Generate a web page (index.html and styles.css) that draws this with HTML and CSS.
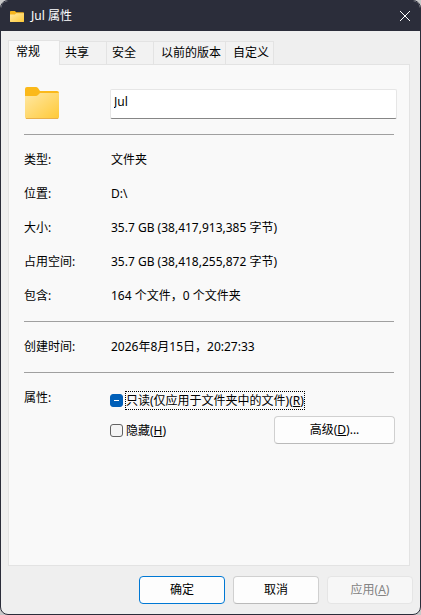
FILE: index.html
```
<!DOCTYPE html>
<html lang="zh-CN">

<head>
    <meta charset="UTF-8">
    <meta name="viewport" content="width=device-width, initial-scale=1.0">
    <title>Jul 属性</title>
    <link rel="stylesheet" href="styles.css">
</head>

<body>

    <form class="window" onsubmit="return false">
        <!-- 标题栏 -->
        <header class="titlebar">
            <svg class="title-icon" viewBox="0 0 34 28" preserveAspectRatio="none" aria-hidden="true">
                <path d="M0 2Q0 0 2 0H12L15 3H32Q34 3 34 6V26Q34 28 32 28H2Q0 28 0 26Z" fill="#f6b41c"/>
                <path d="M0 9H12L15 6H34V26Q34 28 32 28H2Q0 28 0 26Z" fill="url(#front)"/>
            </svg>
            <h1>Jul 属性</h1>
            <button type="button" class="close" aria-label="关闭">
                <svg viewBox="0 0 10 10"><path d="M0 0L10 10M10 0L0 10"/></svg>
            </button>
        </header>

        <!-- 选项卡 -->
        <div class="tabs" role="tablist">
            <button type="button" class="tab active" role="tab" aria-selected="true">常规</button>
            <button type="button" class="tab" role="tab">共享</button>
            <button type="button" class="tab" role="tab">安全</button>
            <button type="button" class="tab tab-wide" role="tab">以前的版本</button>
            <button type="button" class="tab tab-wide" role="tab">自定义</button>
        </div>

        <main class="panel">
            <div class="name-row">
                <svg class="folder" viewBox="0 0 34 32" aria-hidden="true">
                    <defs>
                        <linearGradient id="front" x1="0" y1="0" x2="1" y2="1">
                            <stop offset="0" stop-color="#ffe8a4"/>
                            <stop offset="1" stop-color="#ffc936"/>
                        </linearGradient>
                    </defs>
                    <path d="M0 2Q0 0 2 0H11Q12 0 13 1L15 4H32Q34 4 34 6V14H0Z" fill="#fbb91a"/>
                    <path d="M0 9H11Q12 9 13 8L15 6H34V30Q34 32 32 32H2Q0 32 0 30Z" fill="url(#front)"/>
                    <rect x="1" y="31" width="32" height="1" fill="#e9b04a"/>
                </svg>
                <input type="text" class="name" value="Jul" aria-label="名称">
            </div>

            <hr>

            <dl class="info">
                <dt>类型:</dt>
                <dd>文件夹</dd>
                <dt>位置:</dt>
                <dd>D:\</dd>
                <dt>大小:</dt>
                <dd>35.7 GB (38,417,913,385 字节)</dd>
                <dt>占用空间:</dt>
                <dd>35.7 GB (38,418,255,872 字节)</dd>
                <dt>包含:</dt>
                <dd>164 个文件，0 个文件夹</dd>
            </dl>

            <hr>

            <dl class="info">
                <dt>创建时间:</dt>
                <dd>2026年8月15日，20:27:33</dd>
            </dl>

            <hr>

            <!-- 属性 -->
            <div class="attributes">
                <span class="attr-title">属性:</span>
                <div class="attr-list">
                    <div class="check">
                        <input type="checkbox" id="readonly">
                        <label for="readonly" class="focused">只读(仅应用于文件夹中的文件)(<u>R</u>)</label>
                    </div>
                    <div class="hidden-row">
                        <div class="check">
                            <input type="checkbox" id="hidden">
                            <label for="hidden">隐藏(<u>H</u>)</label>
                        </div>
                        <button type="button" class="btn advanced">高级(<u>D</u>)...</button>
                    </div>
                </div>
            </div>
        </main>

        <!-- 按钮 -->
        <footer class="actions">
            <button type="submit" class="btn default">确定</button>
            <button type="button" class="btn">取消</button>
            <button type="button" class="btn" disabled>应用(<u>A</u>)</button>
        </footer>
    </form>

    <script>
        // 只读为部分选中状态
        document.getElementById('readonly').indeterminate = true;
    </script>

</body>

</html>
```
FILE: styles.css
```
* {
    box-sizing: border-box;
}

body {
    margin: 0;
    background-color: #c9c9c9;
}

body, button, input {
    font-family: "Noto Sans", "Noto Sans CJK SC", sans-serif;
    font-size: 12px;
    line-height: 18px;
    color: #000;
}

u {
    text-underline-offset: 1px;
}

.window {
    display: flex;
    flex-direction: column;
    min-height: 100vh;
    background-color: #efefef;
    border: 1px solid #2b2d3a;
    border-radius: 8px;
    overflow: hidden;
}

/* 标题栏 */
.titlebar {
    display: flex;
    align-items: center;
    height: 30px;
    padding-left: 9px;
    background-color: #2b2d3a;
}

.title-icon {
    width: 14px;
    height: 11px;
}

h1 {
    flex: 1;
    margin: 0 0 0 7px;
    font-size: 12px;
    font-weight: normal;
    color: #fff;
}

.close {
    display: flex;
    align-items: center;
    justify-content: center;
    width: 30px;
    height: 30px;
    padding: 0;
    border: none;
    background: none;
}

.close svg {
    width: 10px;
    height: 10px;
    overflow: visible;
    stroke: #fff;
}

/* 选项卡 */
.tabs {
    display: flex;
    align-items: flex-end;
    padding: 9px 7px 0;
}

.tab {
    height: 23px;
    padding: 0 17px 0 5px;
    border: 1px solid #e3e3e3;
    border-left: none;
    border-bottom: none;
    background-color: #f2f2f2;
    white-space: nowrap;
}

.tab.tab-wide {
    padding: 0 4px 0 7px;
}

.tab.active {
    z-index: 1;
    height: 25px;
    margin-bottom: -1px;
    padding: 0 19px 3px 7px;
    border-left: 1px solid #e3e3e3;
    background-color: #f9f9f9;
}

.panel {
    flex: 1;
    margin: 0 10px 0 7px;
    padding: 22px 15px;
    border: 1px solid #e3e3e3;
    background-color: #f9f9f9;
}

.name-row {
    display: flex;
    align-items: flex-end;
    margin-right: -3px;
}

.folder {
    width: 34px;
    height: 32px;
    margin: 0 51px 0 1px;
}

.name {
    flex: 1;
    min-width: 0;
    height: 30px;
    padding: 0 3px 6px;
    border: 1px solid #e6e6e6;
    border-bottom-color: #868686;
    border-radius: 2px;
    background-color: #fff;
    outline: none;
}

hr {
    height: 1px;
    margin: 8px 0;
    border: none;
    background-color: #a0a0a0;
}

.name-row + hr {
    margin-top: 15px;
}

.info {
    display: grid;
    grid-template-columns: 87px 1fr;
    margin: 0;
    line-height: 34px;
}

.info dd {
    margin: 0;
}

/* 属性 */
.attributes {
    display: grid;
    grid-template-columns: 86px 1fr;
    margin-right: -1px;
    padding-top: 8px;
}

.attr-list {
    display: flex;
    flex-direction: column;
    gap: 6px;
    padding-top: 2px;
}

.check {
    display: flex;
    align-items: center;
    gap: 2px;
}

.check label {
    border: 1px solid transparent;
    line-height: 17px;
    white-space: nowrap;
}

.check .focused {
    border: 1px dotted #000;
}

.check input {
    appearance: none;
    flex: none;
    width: 13px;
    height: 13px;
    margin: 0;
    border: 1px solid #626262;
    border-radius: 3px;
    background-color: #f4f4f4;
}

.check input:indeterminate {
    border-color: #005fb8;
    background: linear-gradient(#fff, #fff) center / 5px 1px no-repeat #005fb8;
}

.hidden-row {
    display: flex;
    align-items: center;
    justify-content: space-between;
}

/* 按钮 */
.btn {
    width: 86px;
    height: 28px;
    padding: 0;
    border: 1px solid #d0d0d0;
    border-bottom-color: #bababa;
    border-radius: 4px;
    background-color: #fdfdfd;
}

.btn.advanced {
    width: 121px;
}

.btn.default {
    border-color: #0078d4;
}

.btn:disabled {
    border-color: #e5e5e5;
    background-color: #f7f7f7;
    color: #838383;
}

.actions {
    display: flex;
    justify-content: flex-end;
    gap: 8px;
    padding: 10px 7px;
}
```
